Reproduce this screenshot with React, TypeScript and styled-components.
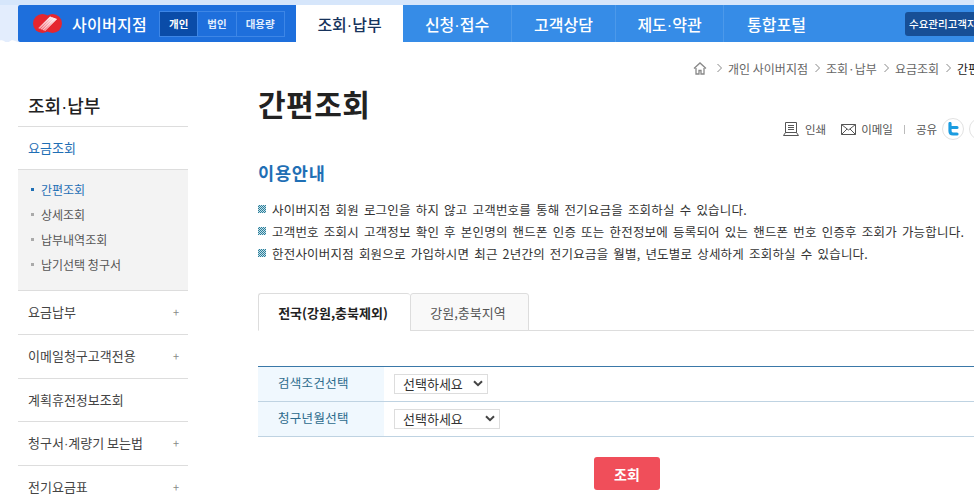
import React from "react";
import styled, { createGlobalStyle } from "styled-components";

const Global = createGlobalStyle`
  html, body { margin: 0; padding: 0; background: #fff; overflow: hidden; }
  body { font-family: "Noto Sans CJK KR", "Liberation Sans", sans-serif; width: 974px; height: 500px; }
  * { box-sizing: border-box; }
  ul { list-style: none; margin: 0; padding: 0; }
`;

const Page = styled.div`
  width: 974px; height: 500px; overflow: hidden; position: relative; background: #fff;
`;
const TopStrip = styled.div`
  height: 42px; padding-top: 5px; display: flex;
  background: linear-gradient(#d6e6fb 0 5px, #fff 5px);
`;
const Cloud = styled.svg`
  width: 18px; height: 37px; flex: none; display: block;
`;
const Header = styled.header`
  display: flex; height: 37px; flex: 1; min-width: 0;
`;
const Brand = styled.div`
  width: 278px; background: #1e6fdc; display: flex; align-items: center; padding-left: 15px; flex: none; border-radius: 2px 0 0 2px;
`;
const BrandName = styled.span`
  color: #fff; font-size: 16px; font-weight: 500; margin-left: 10px; width: 87px; white-space: nowrap; letter-spacing: .3px;
`;
const Segs = styled.div`
  display: flex; height: 26px;
`;
const Seg = styled.span<{ $on?: boolean }>`
  height: 26px; padding: 0 9px; display: flex; align-items: center; font-size: 10.5px; font-weight: 700;
  color: ${p => (p.$on ? "#fff" : "#e3eefc")};
  background: ${p => (p.$on ? "#0a4ca8" : "transparent")};
  border: 1px solid #3d86e6; margin-right: -1px;
`;
const Nav = styled.nav`
  display: flex; flex: 1; background: #368ce7; min-width: 0;
`;
const NavItem = styled.a<{ $on?: boolean; $w: number; $last?: boolean }>`
  width: ${p => p.$w}px; flex: none; display: flex; align-items: center; justify-content: center;
  font-size: 16px; font-weight: 500; white-space: nowrap;
  color: ${p => (p.$on ? "#17335c" : "#fff")};
  background: ${p => (p.$on ? "#fff" : "transparent")};
  border-right: ${p => (p.$on || p.$last ? "0" : "1px solid #4c99ea")};
`;
const Dot = styled.span`
  font-family: "Liberation Sans", sans-serif;
`;
const NavRest = styled.div`
  flex: 1; display: flex; justify-content: flex-end; align-items: center; min-width: 0; overflow: hidden;
`;
const Demand = styled.span`
  width: 69px; height: 24px; background: #174f96; border-radius: 3px 0 0 3px; color: #fff;
  font-size: 10.5px; font-weight: 500; line-height: 24px; padding-left: 4px; white-space: nowrap; overflow: hidden;
`;

const Body = styled.div`
  display: flex; padding-left: 18px; align-items: flex-start;
`;
const Side = styled.aside`
  width: 170px; flex: none; padding-top: 50px;
`;
const SideTitle = styled.div`
  height: 35px; padding-left: 10px; font-size: 18px; font-weight: 500; color: #222; line-height: 26px;
  border-bottom: 1px solid #ddd;
`;
const SideItem = styled.div<{ $on?: boolean; $h?: number }>`
  height: ${p => p.$h ?? 44}px; padding: 0 9px 2px 10px; display: flex; align-items: center; justify-content: space-between;
  font-size: 13px; color: ${p => (p.$on ? "#1f6fb5" : "#444")}; font-weight: 400;
  border-bottom: 1px solid #ddd;
`;
const SideText = styled.span`
  white-space: nowrap;
`;
const Plus = styled.span`
  color: #888; font-size: 11px;
`;
const SubList = styled.ul`
  background: #f3f3f3; border-bottom: 1px solid #ddd; height: 121px; padding: 7px 0 0 13px;
`;
const SubItem = styled.li<{ $on?: boolean }>`
  height: 25px; display: flex; align-items: center; font-size: 12px; color: ${p => (p.$on ? "#1f6fb5" : "#555")};
  &::before {
    content: ""; width: 3px; height: 3px; margin-right: 7px; background: ${p => (p.$on ? "#1f6fb5" : "#aaa")};
  }
`;

const Main = styled.main`
  flex: 1; min-width: 0; padding-left: 70px;
`;
const Crumbs = styled.div`
  height: 30px; margin-top: 11px; display: flex; align-items: center; font-size: 12px; color: #666; white-space: nowrap; padding-left: 435px;
`;
const HomeIcon = styled.svg`
  width: 14px; height: 13px; flex: none; margin-right: 3px;
`;
const Chevron = styled.svg`
  width: 5px; height: 10px; margin: 0 6px 0 7px; flex: none;
`;
const CrumbNow = styled.span`
  color: #222; flex: none;
`;
const PageTitle = styled.h1`
  margin: -2px 0 0; font-size: 30px; font-weight: 700; color: #222; line-height: 44px; height: 44px; letter-spacing: .5px;
`;
const Tools = styled.div`
  display: flex; align-items: center; font-size: 11.5px; color: #555; height: 24px;
  margin-top: -8px; width: 716px; white-space: nowrap; overflow: hidden; padding-left: 525px;
`;
const ToolIcon = styled.svg<{ $gap: number }>`
  flex: none; margin-right: ${p => p.$gap}px;
`;
const ToolGap = styled.span`
  width: 15px; flex: none;
`;
const ToolBar = styled.span`
  width: 1px; height: 9px; background: #bbb; margin: 0 11px; flex: none;
`;
const Round = styled.span`
  width: 22px; height: 22px; flex: none; border-radius: 50%; border: 1px solid #e2e2e2; margin-left: 5px;
  display: flex; align-items: center; justify-content: center;
`;
const Section = styled.h2`
  margin: 20px 0 0; font-size: 17.5px; font-weight: 700; color: #1f6fb5; line-height: 24px; height: 24px; letter-spacing: .8px;
`;
const Guide = styled.ul`
  margin-top: 13px;
`;
const GuideItem = styled.li`
  height: 22px; display: flex; align-items: center; font-size: 12.5px; color: #333; white-space: nowrap;
  letter-spacing: .2px; word-spacing: 2px;
  &::before {
    content: ""; width: 8px; height: 8px; margin-right: 6px; flex: none;
    background: repeating-conic-gradient(#2b7f9c 0 25%, #c6e0e8 0 50%) 0 0 / 2px 2px;
  }
`;
const Tabs = styled.div`
  display: flex; margin-top: 29px; height: 38px; border-bottom: 1px solid #ddd; width: 716px;
`;
const Tab = styled.div<{ $on?: boolean; $w: number }>`
  width: ${p => p.$w}px; height: 38px; display: flex; align-items: center; justify-content: center;
  font-size: 13px; font-weight: ${p => (p.$on ? 700 : 400)};
  padding-right: 3px;
  color: ${p => (p.$on ? "#222" : "#555")};
  background: ${p => (p.$on ? "#fff" : "#f9f9f9")};
  border: 1px solid #ddd; border-radius: 3px 3px 0 0;
  border-bottom: ${p => (p.$on ? "1px solid #fff" : "1px solid #ddd")};
  border-right: ${p => (p.$on ? "0" : "1px solid #ddd")};
`;
const Form = styled.div`
  margin-top: 35px; width: 716px; border-top: 1px solid #3a78a8;
`;
const Row = styled.div`
  display: flex; height: 35px; border-bottom: 1px solid #bfd3e2;
`;
const Label = styled.div`
  width: 126px; flex: none; background: #f0f8fe; color: #2c6a8c; font-size: 12.5px; padding: 0 0 3px 20px; display: flex; align-items: center; letter-spacing: .3px;
`;
const Field = styled.div`
  flex: 1; display: flex; align-items: center; padding: 0 0 1px 10px;
`;
const SelectBox = styled.div<{ $w: number }>`
  width: ${p => p.$w}px; height: 20px; border: 1px solid #ddd; background: #fff; display: flex; align-items: center;
  justify-content: space-between; padding: 0 4px 0 8px; font-size: 13px; color: #333;
`;
const Actions = styled.div`
  width: 716px; display: flex; justify-content: center; margin-top: 20px; padding-left: 22px;
`;
const Submit = styled.button`
  width: 66px; height: 33px; border: 0; border-radius: 3px; background: #f04e5a; color: #fff;
  font: 700 14px "Noto Sans CJK KR", sans-serif; padding: 0;
`;

const Chev = () => (
  <Chevron viewBox="0 0 5 10"><path d="M.5 1l4 4-4 4" fill="none" stroke="#888" strokeWidth="1" /></Chevron>
);
const Caret = () => (
  <svg width="10" height="7" viewBox="0 0 10 7"><path d="M1 1.2l4 4 4-4" fill="none" stroke="#444" strokeWidth="2" /></svg>
);
const Logo = () => (
  <svg width="29" height="19" viewBox="0 0 29 19">
    <defs>
      <linearGradient id="band" x1="0" y1="1" x2="1" y2="0">
        <stop offset="0" stopColor="#ef3b4a" />
        <stop offset="1" stopColor="#ffffff" />
      </linearGradient>
      <pattern id="ht" width="2" height="2" patternUnits="userSpaceOnUse" patternTransform="rotate(45)">
        <rect width="1" height="2" fill="#fff" />
      </pattern>
    </defs>
    <circle cx="9.5" cy="9.5" r="9.5" fill="#e5262f" />
    <circle cx="19.5" cy="9.5" r="9.5" fill="#e5262f" />
    <path d="M5 14L17 2.5 24 5 12 17z" fill="url(#band)" />
    <path d="M5 14L17 2.5 24 5 12 17z" fill="url(#ht)" opacity=".65" />
  </svg>
);

export default function App() {
  return (
    <Page>
      <Global />
      <TopStrip>
        <Cloud viewBox="0 0 18 37">
          <path d="M0 0h18v37l-3-1c-2-1-4-1-6 1-2 1-4 0-5-1-1-.5-3-1-4-.5z" fill="#e3edfd" />
        </Cloud>
        <Header>
          <Brand>
            <Logo />
            <BrandName>사이버지점</BrandName>
            <Segs>
              <Seg $on>개인</Seg>
              <Seg>법인</Seg>
              <Seg>대용량</Seg>
            </Segs>
          </Brand>
          <Nav>
            <NavItem $on $w={107}><span>조회<Dot>·</Dot>납부</span></NavItem>
            <NavItem $w={109}><span>신청<Dot>·</Dot>접수</span></NavItem>
            <NavItem $w={104}>고객상담</NavItem>
            <NavItem $w={108}><span>제도<Dot>·</Dot>약관</span></NavItem>
            <NavItem $last $w={105}>통합포털</NavItem>
            <NavRest><Demand>수요관리고객지원</Demand></NavRest>
          </Nav>
        </Header>
      </TopStrip>
      <Body>
        <Side>
          <SideTitle>조회<Dot>·</Dot>납부</SideTitle>
          <SideItem $on $h={43}>요금조회</SideItem>
          <SubList>
            <SubItem $on>간편조회</SubItem>
            <SubItem>상세조회</SubItem>
            <SubItem>납부내역조회</SubItem>
            <SubItem>납기선택 청구서</SubItem>
          </SubList>
          <SideItem>요금납부<Plus>+</Plus></SideItem>
          <SideItem>이메일청구고객전용<Plus>+</Plus></SideItem>
          <SideItem $h={43}>계획휴전정보조회</SideItem>
          <SideItem><SideText>청구서<Dot>·</Dot>계량기 보는법</SideText><Plus>+</Plus></SideItem>
          <SideItem>전기요금표<Plus>+</Plus></SideItem>
        </Side>
        <Main>
          <Crumbs>
            <HomeIcon viewBox="0 0 14 13"><path d="M1 6.5L7 1l6 5.5M3 6v6h3V8.5h2V12h3V6" fill="none" stroke="#888" strokeWidth="1.3" /></HomeIcon>
            <Chev />개인 사이버지점<Chev />조회·납부<Chev />요금조회<Chev /><CrumbNow>간편조회</CrumbNow>
          </Crumbs>
          <PageTitle>간편조회</PageTitle>
          <Tools>
            <ToolIcon $gap={6} width="16" height="14" viewBox="0 0 16 14"><path d="M2.5.5h11v10h-11zM5 3.5h6M5 5.5h6M5 7.5h6M.5 13.5h15l-2-3h-11z" fill="none" stroke="#555" /></ToolIcon>
            인쇄<ToolGap />
            <ToolIcon $gap={5} width="15" height="11" viewBox="0 0 15 11"><path d="M.5.5h14v10H.5zM.5.5L7.5 6l7-5.5M.5 10.5L6 5M14.5 10.5L9 5" fill="none" stroke="#555" /></ToolIcon>
            이메일<ToolBar />공유
            <Round>
              <svg width="12" height="14" viewBox="0 0 12 14"><path d="M3 1.5v7.5c0 2 1 3 3 3h4M3 5.5h7" fill="none" stroke="#1b9ce0" strokeWidth="3.2" strokeLinecap="round" /></svg>
            </Round>
            <Round />
          </Tools>
          <Section>이용안내</Section>
          <Guide>
            <GuideItem>사이버지점 회원 로그인을 하지 않고 고객번호를 통해 전기요금을 조회하실 수 있습니다.</GuideItem>
            <GuideItem>고객번호 조회시 고객정보 확인 후 본인명의 핸드폰 인증 또는 한전정보에 등록되어 있는 핸드폰 번호 인증후 조회가 가능합니다.</GuideItem>
            <GuideItem>한전사이버지점 회원으로 가입하시면 최근 2년간의 전기요금을 월별, 년도별로 상세하게 조회하실 수 있습니다.</GuideItem>
          </Guide>
          <Tabs>
            <Tab $on $w={152}>전국(강원,충북제외)</Tab>
            <Tab $w={119}>강원,충북지역</Tab>
          </Tabs>
          <Form>
            <Row>
              <Label>검색조건선택</Label>
              <Field><SelectBox $w={94}>선택하세요<Caret /></SelectBox></Field>
            </Row>
            <Row>
              <Label>청구년월선택</Label>
              <Field><SelectBox $w={106}>선택하세요<Caret /></SelectBox></Field>
            </Row>
          </Form>
          <Actions><Submit>조회</Submit></Actions>
        </Main>
      </Body>
    </Page>
  );
}
